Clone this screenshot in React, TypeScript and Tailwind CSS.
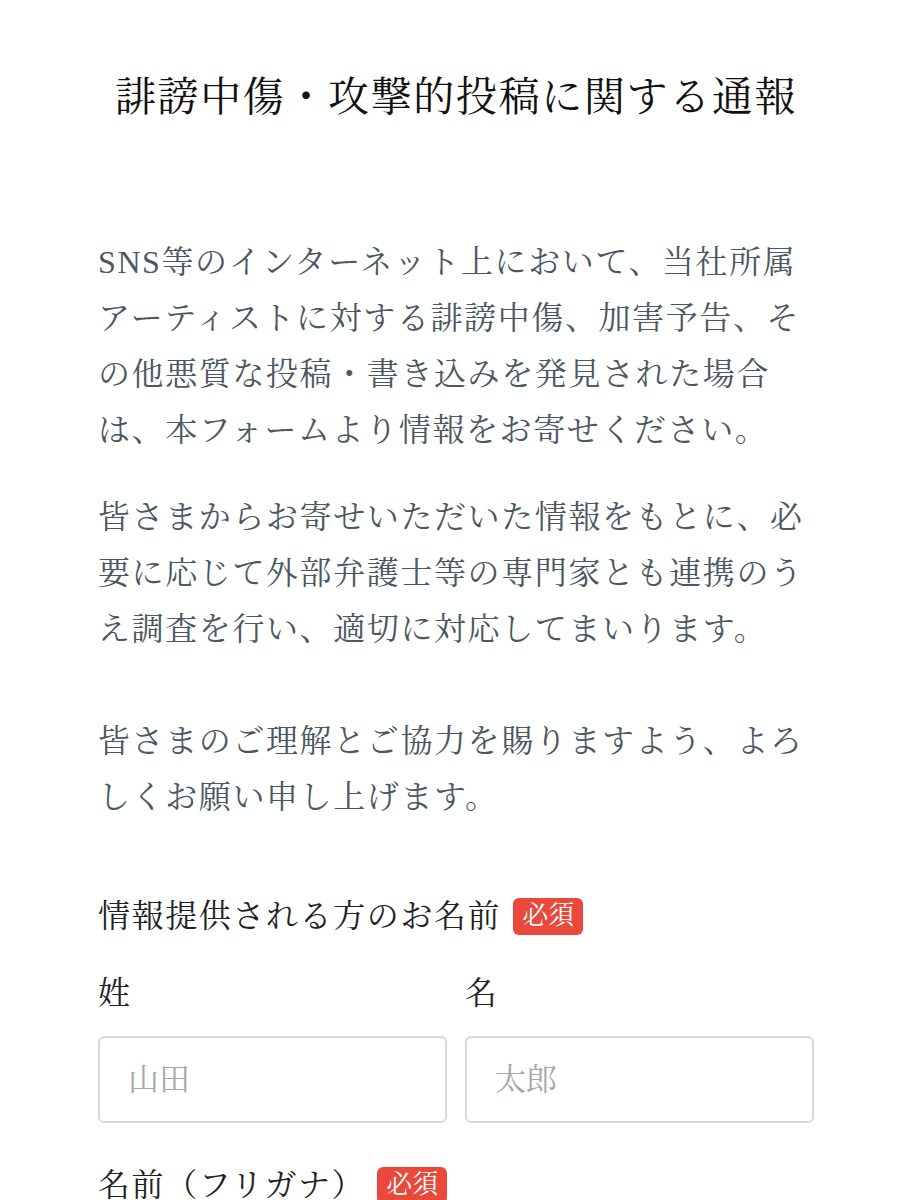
import React from 'react';

const font = { fontFamily: '"Liberation Serif", "Noto Serif CJK JP", "Noto Sans CJK JP", serif' };

const Required: React.FC = () => (
  <span className="ml-3 inline-flex h-[37px] items-center rounded-md bg-[#e9483a] px-[9px] text-[26px] leading-none tracking-normal text-white">
    必須
  </span>
);

const App: React.FC = () => {
  return (
    <div className="min-h-screen bg-white px-[98px] text-[#222]" style={font}>
      {/* Title */}
      <h1 className="pt-[67px] text-center text-[41px] leading-[60px] tracking-[0.04em] text-[#111]">
        誹謗中傷・攻撃的投稿に関する通報
      </h1>

      {/* Intro */}
      <div className="mt-[107px] text-[32px] leading-[56px] tracking-[0.05em] text-[#4b5761]">
        <p>
          SNS等のインターネット上において、当社所属アーティストに対する誹謗中傷、加害予告、その他悪質な投稿・書き込みを発見された場合は、本フォームより情報をお寄せください。
        </p>
        <p className="mt-[31px]">
          皆さまからお寄せいただいた情報をもとに、必要に応じて外部弁護士等の専門家とも連携のうえ調査を行い、適切に対応してまいります。
          <br />
          <br />
          皆さまのご理解とご協力を賜りますよう、よろしくお願い申し上げます。
        </p>
      </div>

      {/* Form */}
      <form className="mt-[63px]">
        <div className="flex items-center text-[32px] leading-[56px] tracking-[0.05em]">
          情報提供される方のお名前
          <Required />
        </div>

        <div className="mt-[21px] grid grid-cols-2 gap-[18px]">
          <label className="flex flex-col">
            <span className="text-[32px] leading-[56px]">姓</span>
            <input
              type="text"
              placeholder="山田"
              className="mt-[15px] h-[87px] w-full rounded-md border-2 border-[#d9d9d9] px-7 text-[31px] outline-none placeholder:text-[#a8a8a8]"
              style={font}
            />
          </label>
          <label className="flex flex-col">
            <span className="text-[32px] leading-[56px]">名</span>
            <input
              type="text"
              placeholder="太郎"
              className="mt-[15px] h-[87px] w-full rounded-md border-2 border-[#d9d9d9] px-7 text-[31px] outline-none placeholder:text-[#a8a8a8]"
              style={font}
            />
          </label>
        </div>

        <div className="mt-[34px] flex items-center text-[32px] leading-[56px] tracking-[0.05em]">
          名前（フリガナ）
          <Required />
        </div>
        <div className="h-40" />
      </form>
    </div>
  );
};

export default App;
